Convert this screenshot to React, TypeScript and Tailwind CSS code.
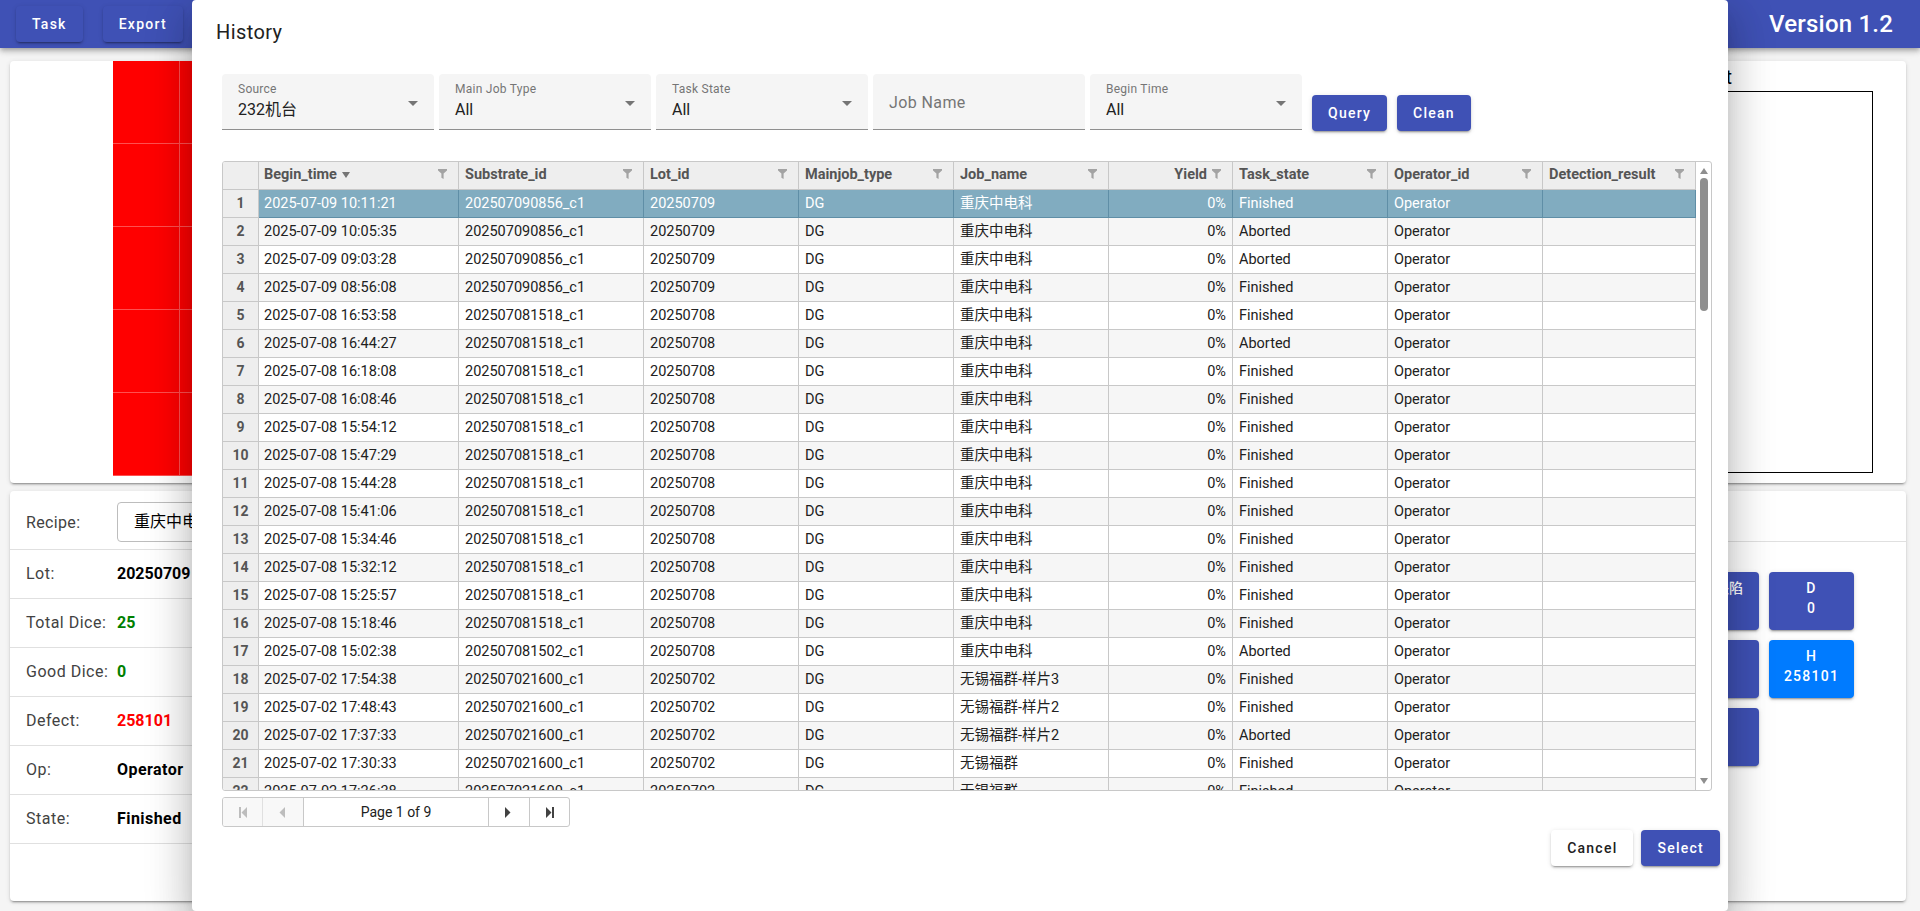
import React from "react";

const btnShadow = "shadow-[0_3px_1px_-2px_rgba(0,0,0,0.2),0_2px_2px_0_rgba(0,0,0,0.14),0_1px_5px_0_rgba(0,0,0,0.12)]";

const columns = [
  { name: "Begin_time", sort: true },
  { name: "Substrate_id" },
  { name: "Lot_id" },
  { name: "Mainjob_type" },
  { name: "Job_name" },
  { name: "Yield", right: true },
  { name: "Task_state" },
  { name: "Operator_id" },
  { name: "Detection_result" },
];

const A = "202507090856_c1";
const B = "202507081518_c1";
const C = "202507021600_c1";

const rows: [string, string, string, string, string][] = [
  ["2025-07-09 10:11:21", A, "20250709", "重庆中电科", "Finished"],
  ["2025-07-09 10:05:35", A, "20250709", "重庆中电科", "Aborted"],
  ["2025-07-09 09:03:28", A, "20250709", "重庆中电科", "Aborted"],
  ["2025-07-09 08:56:08", A, "20250709", "重庆中电科", "Finished"],
  ["2025-07-08 16:53:58", B, "20250708", "重庆中电科", "Finished"],
  ["2025-07-08 16:44:27", B, "20250708", "重庆中电科", "Aborted"],
  ["2025-07-08 16:18:08", B, "20250708", "重庆中电科", "Finished"],
  ["2025-07-08 16:08:46", B, "20250708", "重庆中电科", "Finished"],
  ["2025-07-08 15:54:12", B, "20250708", "重庆中电科", "Finished"],
  ["2025-07-08 15:47:29", B, "20250708", "重庆中电科", "Finished"],
  ["2025-07-08 15:44:28", B, "20250708", "重庆中电科", "Finished"],
  ["2025-07-08 15:41:06", B, "20250708", "重庆中电科", "Finished"],
  ["2025-07-08 15:34:46", B, "20250708", "重庆中电科", "Finished"],
  ["2025-07-08 15:32:12", B, "20250708", "重庆中电科", "Finished"],
  ["2025-07-08 15:25:57", B, "20250708", "重庆中电科", "Finished"],
  ["2025-07-08 15:18:46", B, "20250708", "重庆中电科", "Finished"],
  ["2025-07-08 15:02:38", "202507081502_c1", "20250708", "重庆中电科", "Aborted"],
  ["2025-07-02 17:54:38", C, "20250702", "无锡福群-样片3", "Finished"],
  ["2025-07-02 17:48:43", C, "20250702", "无锡福群-样片2", "Finished"],
  ["2025-07-02 17:37:33", C, "20250702", "无锡福群-样片2", "Aborted"],
  ["2025-07-02 17:30:33", C, "20250702", "无锡福群", "Finished"],
  ["2025-07-02 17:26:38", C, "20250702", "无锡福群", "Finished"],
];

const gridCols = "grid grid-cols-[36px_200px_185px_155px_155px_155px_124px_155px_155px_153px]";

function Caret() {
  return <span className="absolute right-4 top-[27px] w-0 h-0 border-x-[5px] border-x-transparent border-t-[5px] border-t-[#757575]" />;
}

function FilterIcon() {
  return (
    <svg width="9" height="10" viewBox="0 0 9 10" className="shrink-0 mt-[-2px]">
      <path d="M0 0H9V1.5L5.6 4.6V10L3.4 8.8V4.6L0 1.5Z" fill="#a3a3a3" />
    </svg>
  );
}

function SelectField({ label, value }: { label: string; value: string }) {
  return (
    <div className="relative w-[212px] h-14 bg-[#f5f5f5] rounded-t border-b border-[#8f8f8f] pl-4 pt-[7px]">
      <div className="text-xs leading-4 tracking-[0.25px] text-[#757575]">{label}</div>
      <div className="mt-px text-base leading-6 text-[#212121]">{value}</div>
      <Caret />
    </div>
  );
}

function Cell({ children, className }: { children?: React.ReactNode; className: string }) {
  return <div className={`border-r border-b truncate px-[6px] leading-[27px] ${className}`}>{children}</div>;
}

function TableRow({ index, row }: { index: number; row: [string, string, string, string, string] }) {
  const selected = index === 0;
  const bg = selected ? "bg-[#81acc0] text-white border-[#5f8ea6]" : index % 2 === 1 ? "bg-[#f6f6f6] text-[#212121] border-[#c8c8c8]" : "bg-white text-[#212121] border-[#c8c8c8]";
  return (
    <div className={`${gridCols} h-7`}>
      <div className="border-r border-b border-[#c8c8c8] bg-[#eeeeee] text-center text-sm font-bold text-[#555555] leading-[27px]">{index + 1}</div>
      <Cell className={`${bg} indent-[-1px]`}>{row[0]}</Cell>
      <Cell className={bg}>{row[1]}</Cell>
      <Cell className={bg}>{row[2]}</Cell>
      <Cell className={bg}>DG</Cell>
      <Cell className={bg}>{row[3]}</Cell>
      <Cell className={`${bg} text-right`}>0%</Cell>
      <Cell className={bg}>{row[4]}</Cell>
      <Cell className={bg}>Operator</Cell>
      <Cell className={bg} />
    </div>
  );
}

function PagerIcon({ kind, color }: { kind: "first" | "prev" | "next" | "last"; color: string }) {
  const d = {
    first: "M0 0H2V11H0ZM8 0V11L2.5 5.5Z",
    prev: "M6 0V11L0.5 5.5Z",
    next: "M0 0V11L5.5 5.5Z",
    last: "M0 0V11L5.5 5.5ZM6 0H8V11H6Z",
  }[kind];
  return (
    <svg width="8" height="11" viewBox="0 0 8 11">
      <path d={d} fill={color} />
    </svg>
  );
}

function InfoRow({ label, children, className }: { label: string; children: React.ReactNode; className: string }) {
  return (
    <div className="flex items-center h-[49px] border-b border-[#e0e0e0] pl-4">
      <div className="w-[91px] text-[#424242] tracking-[0.5px]">{label}</div>
      <div className={`font-bold ${className}`}>{children}</div>
    </div>
  );
}

function DefectButton({ name, count, active, cjk }: { name: string; count: number; active?: boolean; cjk?: boolean }) {
  return (
    <div className={`h-[58px] rounded pt-[6px] text-center text-sm leading-5 font-medium text-white ${cjk ? "pr-[3px]" : "tracking-[1.25px]"} ${btnShadow} ${active ? "bg-[#007bff]" : "bg-[#3f51b5]"}`}>
      <div>{name}</div>
      <div>{count}</div>
    </div>
  );
}

export default function App() {
  return (
    <div className="relative h-[911px] overflow-hidden bg-[#f5f5f5] text-base font-['Roboto','Noto_Sans_CJK_SC',sans-serif]">
      {/* Page behind the dialog */}
      <header className="flex items-center h-12 bg-[#3f51b5] pl-4 pr-[27px] shadow-[0_2px_4px_-1px_rgba(0,0,0,0.2),0_4px_5px_0_rgba(0,0,0,0.14),0_1px_10px_0_rgba(0,0,0,0.12)]">
        <button className={`h-9 px-4 rounded text-sm font-medium tracking-[1.25px] text-white bg-[#3f51b5] ${btnShadow}`}>Task</button>
        <button className={`h-9 px-4 ml-5 rounded text-sm font-medium tracking-[1.25px] text-white bg-[#3f51b5] ${btnShadow}`}>Export</button>
        <div className="ml-auto text-2xl font-medium tracking-[0.2px] text-white">Version 1.2</div>
      </header>

      <main className="ml-[10px] mr-[14px] mt-[13px]">
        <section className={`flex justify-between h-[422px] bg-white rounded ${btnShadow}`}>
          <div className="ml-[103px] w-[335px] h-[415px] bg-[#ff0000] grid grid-cols-5 grid-rows-5">
            {Array.from({ length: 25 }).map((_, i) => (
              <div key={i} className="border-r border-b border-[#ff5050]" />
            ))}
          </div>
          <div className="w-[300px] mr-[33px] pt-[2px]">
            <div className="w-[159px] h-7 text-right text-[20px] leading-7">Result</div>
            <div className="h-[382px] border border-black" />
          </div>
        </section>

        <section className={`flex justify-between mt-2 h-[410px] bg-white rounded ${btnShadow}`}>
          <div className="w-[600px]">
            <div className="flex items-center h-[59px] border-b border-[#e0e0e0] pl-4 pt-[3px]">
              <div className="w-[91px] text-[#424242] tracking-[0.35px] mt-[2px]">Recipe:</div>
              <div className="w-[300px] h-10 border border-[#bdbdbd] rounded pl-4 leading-[38px]">重庆中电科</div>
            </div>
            <InfoRow label="Lot:" className="text-black">20250709</InfoRow>
            <InfoRow label="Total Dice:" className="text-[#008000]">25</InfoRow>
            <InfoRow label="Good Dice:" className="text-[#008000]">0</InfoRow>
            <InfoRow label="Defect:" className="text-[#ff0000]">258101</InfoRow>
            <InfoRow label="Op:" className="text-black tracking-[0.45px]">Operator</InfoRow>
            <InfoRow label="State:" className="text-black tracking-[0.45px]">Finished</InfoRow>
          </div>
          <div className="w-[500px]">
            <div className="h-[51px] border-b border-[#e0e0e0]" />
            <div className="flex justify-end pt-[30px] pr-[52px]">
              <div className="grid grid-cols-[85px_85px] auto-rows-[58px] gap-[10px]">
                <DefectButton name="其他缺陷" count={0} cjk />
                <DefectButton name="D" count={0} />
                <DefectButton name="G" count={0} />
                <DefectButton name="H" count={258101} active />
                <DefectButton name="I" count={0} />
              </div>
            </div>
          </div>
        </section>
      </main>

      {/* History dialog */}
      <div className="absolute top-0 left-[192px] w-[1536px] h-[911px] bg-white rounded text-[#212121] shadow-[0_11px_15px_-7px_rgba(0,0,0,0.2),0_24px_38px_3px_rgba(0,0,0,0.14),0_9px_46px_8px_rgba(0,0,0,0.12)]">
        <h2 className="flex items-center h-16 pl-6 text-xl font-normal tracking-[0.4px]">History</h2>

        <div className="flex mt-[10px] ml-[30px] gap-[5px]">
          <SelectField label="Source" value="232机台" />
          <SelectField label="Main Job Type" value="All" />
          <SelectField label="Task State" value="All" />
          <div className="w-[212px] h-14 bg-[#f5f5f5] rounded-t border-b border-[#8f8f8f] pl-4 leading-[57px] tracking-[0.4px] text-[#757575]">Job Name</div>
          <SelectField label="Begin Time" value="All" />
          <div className="flex gap-[10px] ml-[5px] mt-[21px]">
            <button className={`h-9 px-4 rounded bg-[#3f51b5] text-sm font-medium tracking-[1.25px] text-white ${btnShadow}`}>Query</button>
            <button className={`h-9 px-4 rounded bg-[#3f51b5] text-sm font-medium tracking-[1.25px] text-white ${btnShadow}`}>Clean</button>
          </div>
        </div>

        <div className="flex mt-[30px] ml-[30px] w-[1490px] h-[630px] border border-[#c8c8c8] rounded-[3px] overflow-hidden text-[14.5px]">
          <div className="w-[1473px] overflow-hidden">
            <div className={`${gridCols} h-7 bg-[#eeeeee] font-bold text-[#555555]`}>
              <div className="border-r border-b border-[#c8c8c8]" />
              {columns.map((c) => (
                <div key={c.name} className="flex items-center border-r border-b border-[#c8c8c8] pl-[6px] pr-[11px] pb-px">
                  <div className={`flex-1 flex items-center gap-[5px] truncate ${c.right ? "justify-end pr-[5px]" : ""} ${c.sort ? "ml-[-1px]" : ""}`}>
                    {c.name}
                    {c.sort && <span className="w-0 h-0 border-x-[4.5px] border-x-transparent border-t-[6px] border-t-[#757575]" />}
                  </div>
                  <FilterIcon />
                </div>
              ))}
            </div>
            {rows.map((row, i) => (
              <TableRow key={i} index={i} row={row} />
            ))}
          </div>
          <div className="relative flex-1 flex flex-col items-center">
            <span className="mt-[6px] w-0 h-0 border-x-[4.5px] border-x-transparent border-b-[6px] border-b-[#8f8f8f]" />
            <div className="mt-1 w-2 h-[133px] rounded-full bg-[#8f8f8f]" />
            <span className="mt-auto mb-[6px] w-0 h-0 border-x-[4.5px] border-x-transparent border-t-[6px] border-t-[#8f8f8f]" />
          </div>
        </div>

        <div className="flex mt-[6px] ml-[30px] w-[348px] h-[30px] border border-[#c8c8c8] rounded-[3px] text-sm overflow-hidden">
          <div className="flex items-center justify-center w-10 border-r border-[#e0e0e0] bg-[#f8f8f8]"><PagerIcon kind="first" color="#bdbdbd" /></div>
          <div className="flex items-center justify-center w-[41px] border-r border-[#c8c8c8] bg-[#f8f8f8]"><PagerIcon kind="prev" color="#bdbdbd" /></div>
          <div className="flex items-center justify-center w-[185px] border-r border-[#c8c8c8] text-[#212121]">Page 1 of 9</div>
          <div className="flex items-center justify-center w-[41px] border-r border-[#c8c8c8]"><PagerIcon kind="next" color="#424242" /></div>
          <div className="flex items-center justify-center flex-1"><PagerIcon kind="last" color="#424242" /></div>
        </div>

        <div className="flex justify-end gap-2 pr-2 mt-[3px]">
          <button className={`h-9 px-4 rounded bg-white text-sm font-medium tracking-[1.25px] text-[#212121] ${btnShadow}`}>Cancel</button>
          <button className={`h-9 px-4 rounded bg-[#3f51b5] text-sm font-medium tracking-[1.25px] text-white ${btnShadow}`}>Select</button>
        </div>
      </div>
    </div>
  );
}
